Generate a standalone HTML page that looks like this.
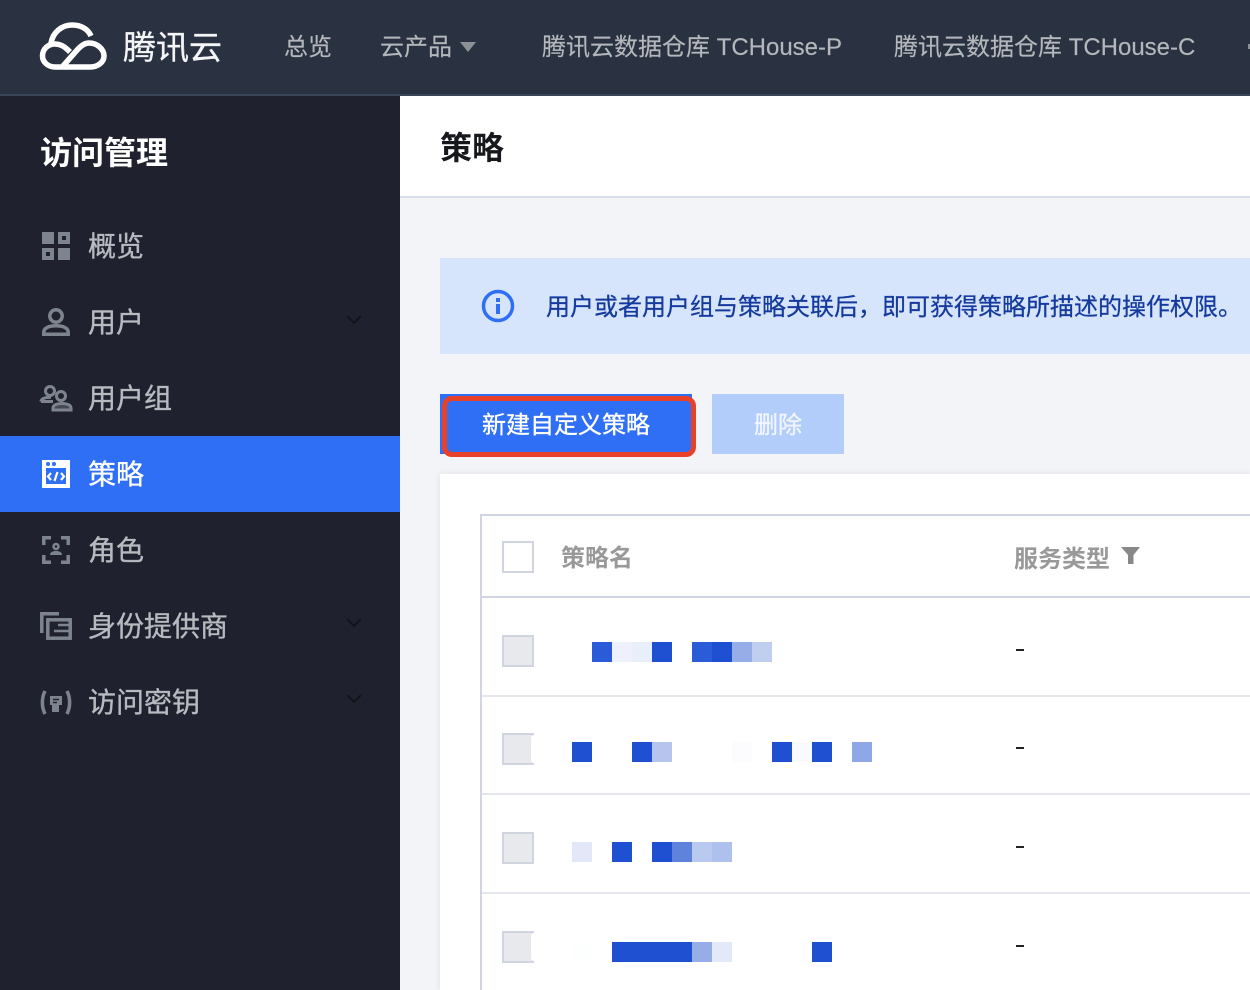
<!DOCTYPE html>
<html lang="zh-CN"><head><meta charset="utf-8"><title>策略</title>
<style>
html,body{margin:0;padding:0;width:1250px;height:990px;overflow:hidden;background:#f2f4f8}
body{position:relative;font-family:"Liberation Sans","Noto Sans CJK SC",sans-serif}
.a{position:absolute}
.t{position:absolute;white-space:nowrap}
.nav{font-size:24px;line-height:32px;color:#b4b7bc;top:32px;-webkit-text-stroke:.15px}
.m{font-size:28px;line-height:40px;color:#b7babf;left:88px;-webkit-text-stroke:.35px}
.b{position:absolute;height:20px;width:20px;background:#2050d2}
.cb{position:absolute;left:502px;width:32px;height:32px;box-sizing:border-box;border:2px solid #d0d5df;background:#e7e9ed}
.cb i{position:absolute;right:-2px;top:0;bottom:0;width:3px;background:#fff;border-radius:4px 0 0 4px}
.l{position:absolute;left:482px;right:0;height:2px;background:#e6e7ee}
.d{position:absolute;left:1016px;width:8px;height:2px;background:#222}
svg{position:absolute;overflow:visible}
</style></head><body>

<!-- top nav -->
<div class="a" style="left:0;top:0;width:1250px;height:94px;background:#2a3140"></div>
<div class="a" style="left:0;top:94px;width:1250px;height:2px;background:#3a4558"></div>
<svg style="left:0;top:0" width="120" height="90" fill="none" stroke="#fff" stroke-width="5.5"><path d="M51 43C53 32 62 25 72 25C81 25 88 29 91 36"/><path d="M63 66L78 49C82 45 85 43 89 43C97 43 104 49 104 56C104 62 98 67 90 67H55C48 67 42.500 62 42.500 56C42.500 49 48 44 55 44C60 44 64 46 68 50L70 52"/></svg>
<div class="t" style="left:123px;top:25px;font-size:33px;line-height:46px;color:#f4f5f6;-webkit-text-stroke:.3px">腾讯云</div>
<div class="t nav" style="left:284px">总览</div>
<div class="t nav" style="left:380px">云产品</div>
<svg style="left:460px;top:42px" width="16" height="10"><path d="M0 0H16L8 10Z" fill="#8d9096"/></svg>
<div class="t nav" style="left:542px">腾讯云数据仓库 TCHouse-P</div>
<div class="t nav" style="left:894px">腾讯云数据仓库 TCHouse-C</div>
<div class="a" style="left:1248px;top:44px;width:2px;height:5px;background:#8d9096"></div>

<!-- sidebar -->
<div class="a" style="left:0;top:96px;width:400px;height:894px;background:#1f222e"></div>
<div class="a" style="left:0;top:436px;width:400px;height:76px;background:#2e6ff6"></div>
<div class="t" style="left:40px;top:130px;font-size:32px;line-height:46px;font-weight:700;color:#fff">访问管理</div>

<svg style="left:42px;top:232px" width="28" height="28" fill="#7e848d" fill-rule="evenodd"><path d="M0 0H12V12H0Z"/><path d="M16 0H28V12H16ZM20 4V8H24V4Z"/><path d="M0 16H12V28H0ZM4 20V24H8V20Z"/><path d="M16 16H28V28H16Z"/></svg>
<div class="t m" style="top:227px">概览</div>

<svg style="left:42px;top:308px" width="28" height="28" fill="none" stroke="#7e848d" stroke-width="3.5"><circle cx="14" cy="8" r="6.200"/><path d="M1.800 26.200V24C1.800 20 7 17.800 14 17.800S26.200 20 26.200 24V26.200Z"/></svg>
<div class="t m" style="top:303px">用户</div>
<svg style="left:346px;top:315px" width="16" height="9" fill="none" stroke="#12141b" stroke-width="2"><path d="M1 1L8 8L15 1"/></svg>

<svg style="left:40px;top:384px" width="32" height="28" fill="none" stroke="#7e848d" stroke-width="3"><circle cx="10" cy="7" r="4.500"/><path d="M1 17.500C1 14.500 6 13 11 13.500"/><path d="M1 17.500H13"/><circle cx="21" cy="12" r="4.500"/><path d="M13 26V24C13 21 17 19.500 22 19.500S31 21 31 24V26Z" fill="#7e848d" fill-opacity=".4"/></svg>
<div class="t m" style="top:379px">用户组</div>

<svg style="left:42px;top:460px" width="28" height="28"><rect width="28" height="28" fill="#fff"/><circle cx="6" cy="4" r="2" fill="#2e6ff6"/><circle cx="12" cy="4" r="2" fill="#2e6ff6"/><rect x="4" y="8" width="20" height="16" fill="#2e6ff6"/><path d="M9 13L6 16.500L9 20M19 13L22 16.500L19 20M15.500 12L12.500 21" fill="none" stroke="#fff" stroke-width="2.200"/></svg>
<div class="t m" style="top:455px;color:#fff">策略</div>

<svg style="left:42px;top:536px" width="28" height="28" fill="none" stroke="#7e848d" stroke-width="3.500"><path d="M9 1.800H1.800V9M19 1.800H26.200V9M1.800 19V26.200H9M26.200 19V26.200H19"/><circle cx="14" cy="10.500" r="2.500" stroke-width="2.500"/><path d="M8 19C8 16 11 15 14 15S20 16 20 19Z" fill="#7e848d" stroke="none"/></svg>
<div class="t m" style="top:531px">角色</div>

<svg style="left:40px;top:612px" width="32" height="28" fill="none" stroke="#7e848d"><path d="M19 1.800H1.800V21" stroke-width="3.500"/><rect x="7.800" y="7.800" width="22.400" height="18.400" stroke-width="3.500"/><path d="M18 13H29M14 19H29" stroke-width="2.500"/></svg>
<div class="t m" style="top:607px">身份提供商</div>
<svg style="left:346px;top:618px" width="16" height="9" fill="none" stroke="#12141b" stroke-width="2"><path d="M1 1L8 8L15 1"/></svg>

<svg style="left:40px;top:690px" width="32" height="26"><path d="M5 1C1.500 8 1.500 17 5 24M27 1C30.500 8 30.500 17 27 24" fill="none" stroke="#7e848d" stroke-width="3.500"/><path d="M10 6H22V15H19V22H12V15H10Z" fill="#7e848d"/><path d="M13 9.500H19M13 12.500H17" stroke="#1f222e" stroke-width="1.500"/></svg>
<div class="t m" style="top:683px">访问密钥</div>
<svg style="left:346px;top:694px" width="16" height="9" fill="none" stroke="#12141b" stroke-width="2"><path d="M1 1L8 8L15 1"/></svg>

<!-- title bar -->
<div class="a" style="left:400px;top:96px;width:850px;height:100px;background:#fff"></div>
<div class="a" style="left:400px;top:196px;width:850px;height:2px;background:#d8dfe8"></div>
<div class="t" style="left:440px;top:125px;font-size:32px;line-height:46px;font-weight:700;color:#16181c">策略</div>

<!-- alert -->
<div class="a" style="left:440px;top:258px;width:810px;height:96px;background:#d6e4fc"></div>
<svg style="left:482px;top:290px" width="32" height="32"><circle cx="16" cy="16" r="14.500" fill="none" stroke="#2e6ff6" stroke-width="3.500"/><rect x="14" y="8" width="4" height="4" fill="#2e6ff6"/><rect x="14" y="14" width="4" height="10" fill="#2e6ff6"/></svg>
<div class="t" style="left:546px;top:292px;font-size:24px;line-height:32px;color:#153a9e;-webkit-text-stroke:.25px">用户或者用户组与策略关联后，即可获得策略所描述的操作权限。</div>

<!-- buttons -->
<div class="a" style="left:440px;top:394px;width:252px;height:60px;background:#2e6ff6"></div>
<div class="a" style="left:442px;top:396px;width:254px;height:61px;box-sizing:border-box;border:5.500px solid #e8412a;border-radius:10px;background:#2e6ff6"></div>
<div class="t" style="left:482px;top:410px;font-size:24px;line-height:32px;color:#fff;-webkit-text-stroke:.35px">新建自定义策略</div>
<div class="a" style="left:712px;top:394px;width:132px;height:60px;background:#b2cdfa"></div>
<div class="t" style="left:754px;top:410px;font-size:24px;line-height:32px;color:#f0f5fe;-webkit-text-stroke:.35px">删除</div>

<!-- card -->
<div class="a" style="left:440px;top:474px;width:810px;height:516px;background:#fff;box-shadow:0 0 6px rgba(54,58,80,.1)"></div>
<div class="a" style="left:480px;top:514px;width:770px;height:2px;background:#d0d5df"></div>
<div class="a" style="left:480px;top:514px;width:2px;height:476px;background:#d0d5df"></div>
<div class="l" style="top:596px;background:#d0d5df"></div>
<div class="l" style="top:695px"></div>
<div class="l" style="top:793px"></div>
<div class="l" style="top:892px"></div>

<div class="cb" style="top:541px;background:#fff"></div>
<div class="t" style="left:561px;top:543px;font-size:24px;line-height:32px;font-weight:700;color:#999">策略名</div>
<div class="t" style="left:1014px;top:544px;font-size:24px;line-height:32px;font-weight:700;color:#999">服务类型</div>
<svg style="left:1120px;top:546px" width="20" height="20"><path d="M1 1H20L13.500 9V18H8V9Z" fill="#888"/></svg>

<div class="cb" style="top:635px"></div>
<div class="cb" style="top:733px"><i></i></div>
<div class="cb" style="top:832px"></div>
<div class="cb" style="top:931px"><i></i></div>

<div class="d" style="top:649px"></div>
<div class="d" style="top:747px"></div>
<div class="d" style="top:846px"></div>
<div class="d" style="top:945px"></div>

<!-- row 1 -->
<div class="b" style="top:642px;left:592px;background:#2b5bd6"></div>
<div class="b" style="top:642px;left:612px;background:#eef1fb"></div>
<div class="b" style="top:642px;left:632px;background:#e8eefa"></div>
<div class="b" style="top:642px;left:652px"></div>
<div class="b" style="top:642px;left:692px;background:#2b5bd6"></div>
<div class="b" style="top:642px;left:712px"></div>
<div class="b" style="top:642px;left:732px;background:#97ade8"></div>
<div class="b" style="top:642px;left:752px;background:#c0cef0"></div>
<!-- row 2 -->
<div class="b" style="top:742px;left:572px"></div>
<div class="b" style="top:742px;left:632px"></div>
<div class="b" style="top:742px;left:652px;background:#b5c5ee"></div>
<div class="b" style="top:742px;left:732px;background:#fcfcfe"></div>
<div class="b" style="top:742px;left:772px"></div>
<div class="b" style="top:742px;left:792px;background:#f9fafe"></div>
<div class="b" style="top:742px;left:812px"></div>
<div class="b" style="top:742px;left:852px;background:#8ea7e6"></div>
<!-- row 3 -->
<div class="b" style="top:842px;left:572px;background:#e3e7f8"></div>
<div class="b" style="top:842px;left:612px"></div>
<div class="b" style="top:842px;left:652px"></div>
<div class="b" style="top:842px;left:672px;background:#5f83dd"></div>
<div class="b" style="top:842px;left:692px;background:#bac9f0"></div>
<div class="b" style="top:842px;left:712px;background:#adc0ee"></div>
<!-- row 4 -->
<div class="b" style="top:942px;left:572px;background:#fdfefe"></div>
<div class="b" style="top:942px;left:612px;width:80px"></div>
<div class="b" style="top:942px;left:692px;background:#97ade8"></div>
<div class="b" style="top:942px;left:712px;background:#e3e9f8"></div>
<div class="b" style="top:942px;left:812px"></div>

</body></html>
